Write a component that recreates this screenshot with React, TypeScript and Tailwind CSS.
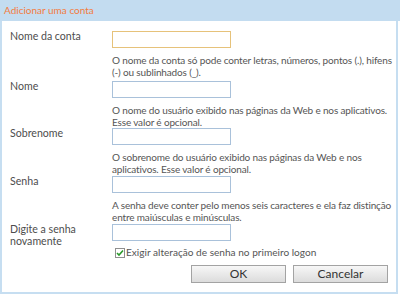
import React from "react";

function Row({
  label,
  help,
  focused,
}: {
  label: React.ReactNode;
  help?: [string, string];
  focused?: boolean;
}) {
  return (
    <div className={`flex ${help ? "" : "h-[17px]"}`}>
      <div className="w-[110px] shrink-0 pl-[8px] leading-[11.5px] text-[10.6px] text-[#4d4d4d]">{label}</div>
      <div className="flex flex-col">
        <div
          className={`block w-[119px] h-[17px] bg-white border ${
            focused ? "border-[#e6c27a]" : "border-[#a9c1da]"
          }`}
        />
        {help && (
          <div className="mt-[6px] whitespace-nowrap leading-[12px] text-[10px] tracking-[-0.15px] text-[#555]">
            {help[0]}
            <br />
            {help[1]}
          </div>
        )}
      </div>
    </div>
  );
}

export default function App() {
  return (
    <div className="w-[400px] h-[294px] bg-white font-['Lato',sans-serif] text-[11px] text-[#4a4a4a] overflow-hidden">
      <div className="w-[398px] h-[294px] flex flex-col border-l-[2px] border-r-[2px] border-b-[2px] border-[#c6def1]">
        <div className="h-[21px] -mx-[2px] w-[400px] bg-[#c3dcf0] pl-[4px] flex items-center text-[#f37b3e] text-[10px]">
          Adicionar uma conta
        </div>
        <div className="flex flex-col pt-[10px]">
          <Row
            label="Nome da conta"
            focused
            help={[
              "O nome da conta só pode conter letras, números, pontos (.), hifens",
              "(-) ou sublinhados (_).",
            ]}
          />
          <div className="h-[3px]" />
          <Row
            label="Nome"
            help={[
              "O nome do usuário exibido nas páginas da Web e nos aplicativos.",
              "Esse valor é opcional.",
            ]}
          />
          <Row
            label="Sobrenome"
            help={[
              "O sobrenome do usuário exibido nas páginas da Web e nos",
              "aplicativos. Esse valor é opcional.",
            ]}
          />
          <div className="h-[1px]" />
          <Row
            label="Senha"
            help={[
              "A senha deve conter pelo menos seis caracteres e ela faz distinção",
              "entre maiúsculas e minúsculas.",
            ]}
          />
          <div className="h-[1px]" />
          <Row
            label={
              <>
                Digite a senha
                <br />
                novamente
              </>
            }
          />
          <div className="flex items-center mt-[5px] h-[14px] pl-[113px] gap-[1px] text-[10.1px] text-[#555]">
            <span className="w-[10px] h-[10px] border border-[#8f8f8f] bg-white flex items-center justify-center">
              <svg width="8" height="8" viewBox="0 0 8 8">
                <path d="M1 4 L3 6 L7 1.5" stroke="#2a9a2a" strokeWidth="1.6" fill="none" />
              </svg>
            </span>
            <span>Exigir alteração de senha no primeiro logon</span>
          </div>
          <div className="flex justify-end gap-[7px] mt-[5px] pr-[8px]">
            <button className="w-[95px] h-[18px] border border-[#a3a3a3] bg-gradient-to-b from-[#f7f7f7] to-[#dcdcdc] text-[12px] text-[#333] leading-none">
              OK
            </button>
            <button className="w-[95px] h-[18px] border border-[#a3a3a3] bg-gradient-to-b from-[#f7f7f7] to-[#dcdcdc] text-[12px] text-[#333] leading-none">
              Cancelar
            </button>
          </div>
        </div>
      </div>
    </div>
  );
}
